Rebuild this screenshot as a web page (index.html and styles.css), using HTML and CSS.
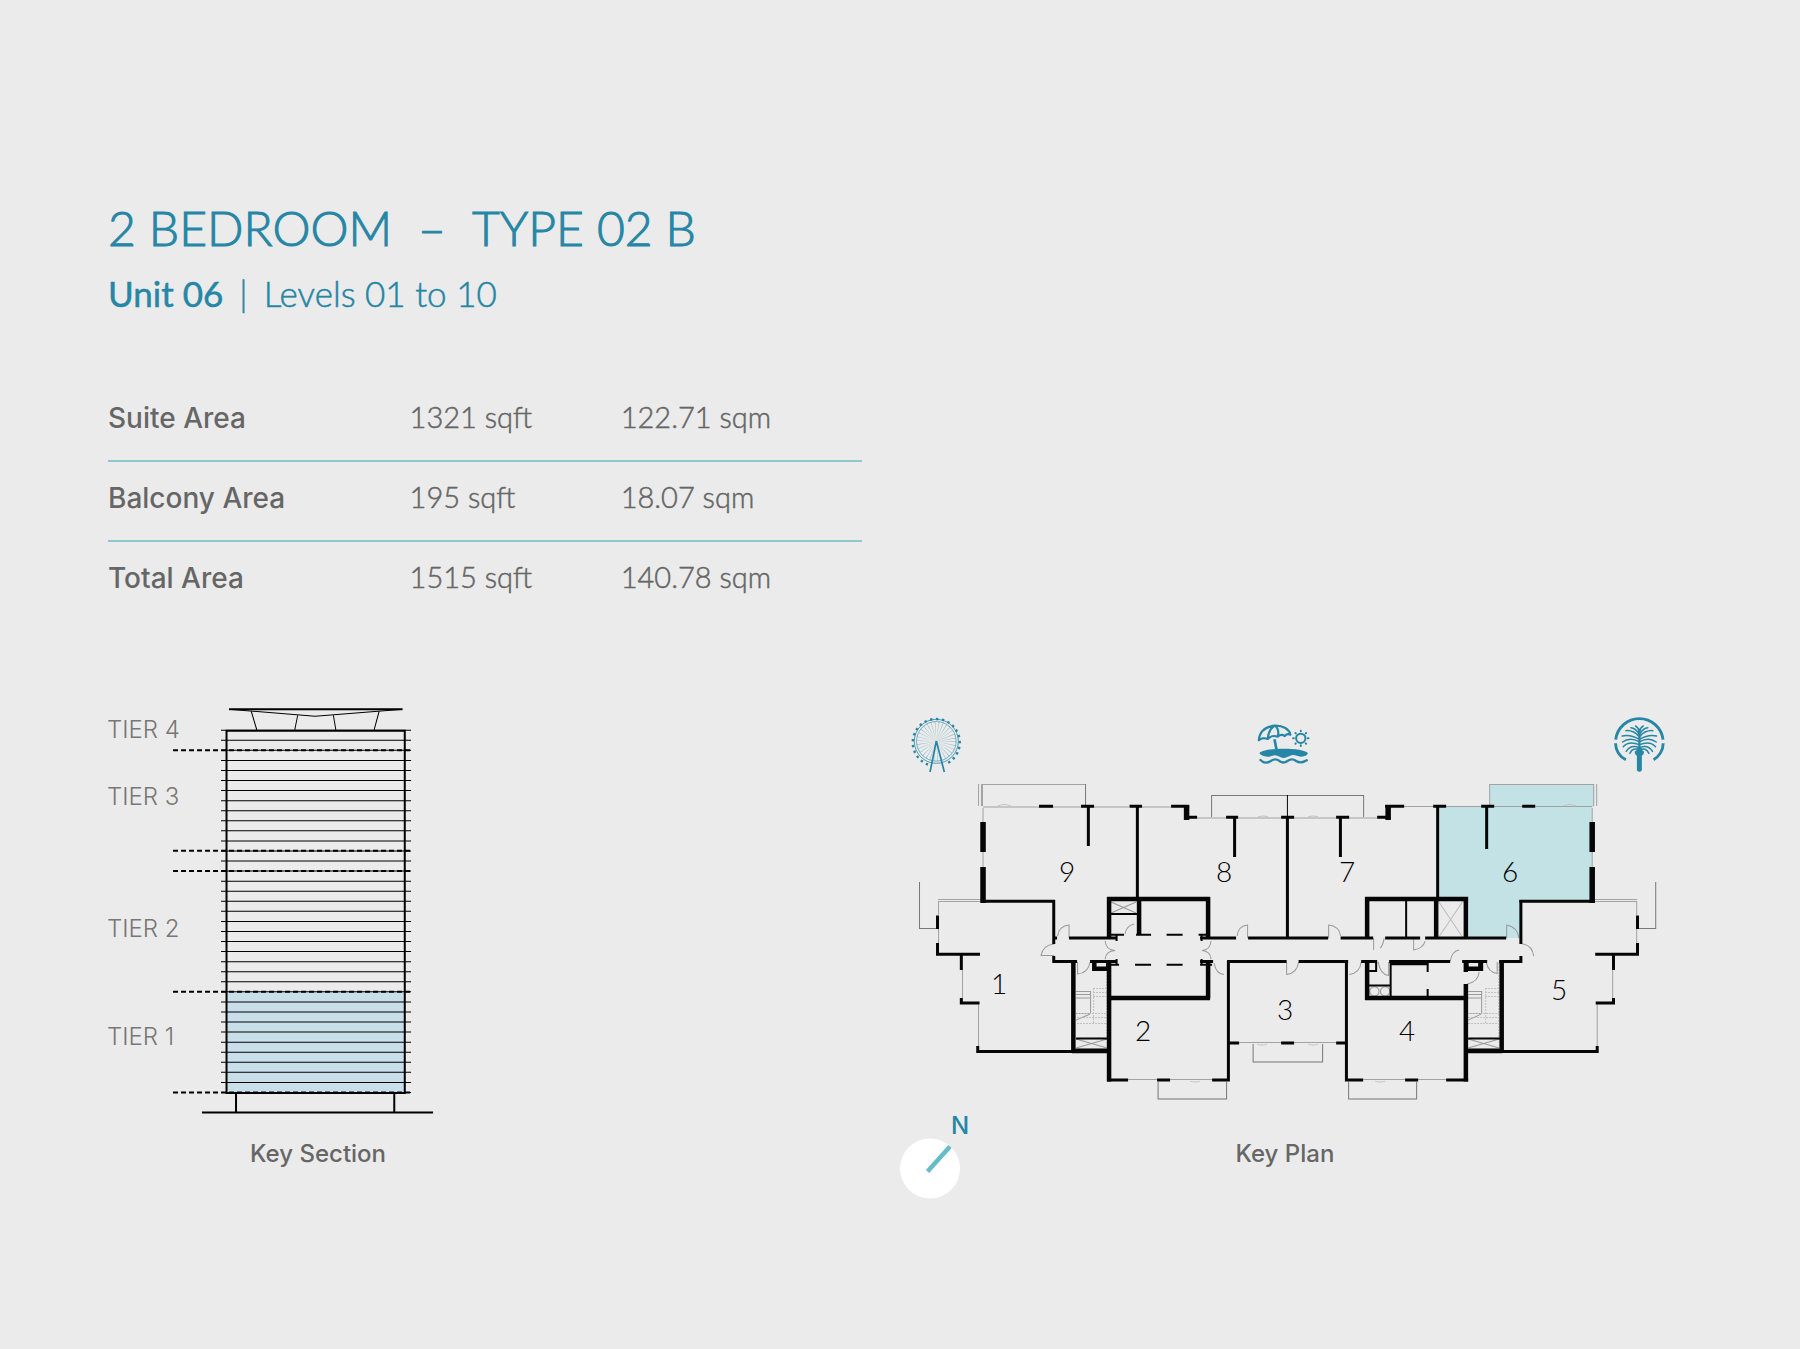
FILE: index.html
```html
<!DOCTYPE html>
<html lang="en">
<head>
<meta charset="utf-8">
<meta name="viewport" content="width=device-width, initial-scale=1">
<title>2 Bedroom – Type 02 B</title>
<link rel="stylesheet" href="styles.css">
</head>
<body>
<main class="sheet">
  <header class="heading">
    <h1 class="title"><span>2 BEDROOM</span><span>–</span><span>TYPE 02 B</span></h1>
    <p class="subtitle"><strong>Unit 06</strong><span>|</span><span>Levels 01 to 10</span></p>
  </header>

  <table class="areas">
    <tbody>
      <tr><th scope="row">Suite Area</th><td>1321 sqft</td><td>122.71 sqm</td></tr>
      <tr><th scope="row">Balcony Area</th><td>195 sqft</td><td>18.07 sqm</td></tr>
      <tr><th scope="row">Total Area</th><td>1515 sqft</td><td>140.78 sqm</td></tr>
    </tbody>
  </table>

  <div class="keys">
    <figure class="section">
      <svg class="drawing" viewBox="108 700 326 430" role="img" aria-label="Tower section with tier 1 highlighted">
        <rect class="tier-fill" x="227" y="992" width="178" height="101"/>
        <path class="floor" d="M221 730.2h190m-190 10.06h190m-190 10.06h190m-190 10.06h190m-190 10.06h190m-190 10.06h190m-190 10.06h190m-190 10.06h190m-190 10.06h190m-190 10.06h190m-190 10.06h190m-190 10.06h190m-190 10.06h190m-190 10.06h190m-190 10.06h190m-190 10.06h190m-190 10.06h190m-190 10.06h190m-190 10.06h190m-190 10.06h190m-190 10.06h190m-190 10.06h190m-190 10.06h190m-190 10.06h190m-190 10.06h190m-190 10.06h190m-190 10.06h190m-190 10.06h190m-190 10.06h190m-190 10.06h190m-190 10.06h190m-190 10.06h190m-190 10.06h190m-190 10.06h190m-190 10.06h190m-190 10.06h190m-190 10.06h190"/>
        <path class="tier-line" d="M173 750.3H411M173 850.8H411M173 871H411M173 991.8H411M173 1092.4H411"/>
        <path class="frame" d="M226.5 730.8H404.7V1093H226.5zM236 1093V1112M394.2 1093V1112M202 1112.5H433M229 709.2H402.5"/>
        <path class="roof" d="M232 709.5L315 716.3L400 709.5M251.3 711.5L256.8 730M297.7 715L294.7 730M333.3 715L335.8 730M379 711.5L374 730"/>
        <g class="tier-name">
          <text x="107" y="738">TIER 4</text>
          <text x="107" y="805">TIER 3</text>
          <text x="107" y="937">TIER 2</text>
          <text x="107" y="1045">TIER 1</text>
        </g>
      </svg>
      <figcaption class="section-caption">Key Section</figcaption>
    </figure>

    <figure class="plan">
      <svg class="drawing" viewBox="900 700 792 410" role="img" aria-label="Floor key plan with unit 6 highlighted">
        <!-- ferris wheel -->
        <g class="ink">
          <circle cx="936.3" cy="741.3" r="22" stroke-width=".8"/>
          <circle cx="936.3" cy="741.3" r="19.8" stroke-width=".6"/>
          <path d="M928 764.500A23.500 23.500 0 1 1 945 764.300" stroke-width="2.4" stroke-dasharray="2.4 3.5"/>
          <circle cx="936.3" cy="741.3" r="10" stroke-width="19" stroke-dasharray=".35 1.74" opacity=".45"/>
          <path d="M936.3 741L930 772M936.3 741L944.3 772" stroke-width="1.7"/>
        </g>
        <!-- beach -->
        <g class="ink" transform="translate(1240 700) scale(.3333)">
          <path stroke-width="6.500" stroke-linejoin="round" d="M56 121C58 96 75 80 103 77C130 76 147 88 151 104C145 101 138 103 134 108C127 103 119 104 113 110C103 106 90 108 83 117C74 113 62 115 56 121zM103 77C88 88 84 102 83 117M103 77C115 84 116 98 113 110"/>
          <path stroke-width="8" d="M103 118L109 148"/>
          <circle cx="182" cy="115" r="14" stroke-width="6"/>
          <path stroke-width="6" stroke-linecap="round" d="M182 94v-2M182 136v2M161 115h-2M203 115h2M167 100l-1-1M197 100l1-1M167 130l-1 1M197 130l1 1"/>
          <path class="solid" d="M58 159C72 142 190 142 203 159C204 165 192 170 182 170C172 170 164 163 154 166C144 170 138 174 130 174C120 174 114 166 105 166C96 166 92 171 82 170C72 169 60 166 58 159z"/>
          <path stroke-width="7" stroke-linecap="round" d="M61 180C68 187 80 191 92 183Q106 173 118 183Q130 192 142 183Q156 173 168 183Q182 192 200 181"/>
        </g>
        <!-- palm island -->
        <g class="ink" transform="translate(1600 700) scale(.3333)">
          <path stroke-width="8.500" d="M46.500 119A71.500 71.500 0 0 1 188.500 119M46 130C46 150 58 170 77 179M189 130C189 150 177 170 160 179"/>
          <path stroke-width="15" stroke-linecap="round" d="M117.500 160V208"/>
          <path stroke-width="7" d="M117.500 86V155"/>
          <path class="solid" d="M111 144H124L126 151L132 155L129 164L124 167H111L106 164L103 155L109 151z"/>
          <path stroke-width="4.500" stroke-linecap="round" d="M117 150Q98 140 89 160M117 143Q92 132 78 154M117 134Q86 122 69 140M117 125Q88 110 67 126M117 118Q90 102 66 108M117 110Q100 90 77 92M117 102Q106 84 92 83M117 94Q114 82 106 78M118 150Q137 140 146 160M118 143Q143 132 157 154M118 134Q149 122 166 140M118 125Q147 110 168 126M118 118Q145 102 169 108M118 110Q135 90 158 92M118 102Q129 84 143 83M118 94Q121 82 129 78"/>
        </g>

        <path class="unit-fill" d="M1437 807H1489V784H1594V807H1592V901H1520V938H1467V898H1437z"/>

        <!-- glazing and balconies -->
        <g class="glass">
          <path d="M983 807H1129M1142 807H1171M1404 806.500H1433M1446 806.500H1592M1197 818H1226M1238 818H1281M1294 818H1336M1349 818H1377M983 808V822M983 852V867M1592 808V822M1592 852V867M938 899.500H981M938 901.500H981M1594 899.500H1637M1594 901.500H1637M938.500 901V915M938.500 929V943M1636.500 901V915M1636.500 929V943M962.500 970V998M1612.500 970V998M978.500 1004V1046M1597 1004V1046M1239 1042.500H1281M1294 1042.500H1336M1128 1079.500H1157M1170 1079.500H1212M1363 1079.500H1405M1418 1079.500H1446"/>
          <path d="M978.500 784V806M981.500 784V806M982.500 806V784.500H1085.500M1489.500 806V784.500H1594M1593.500 784V806M1596.500 784V806"/>
          <path class="sash" d="M998 806q6-3 13 0M1563 806q6-3 13 0M1258 817q5-2 10 0M1308 817q5-2 10 0M1257 1044q5 2 10 0M1308 1044q5 2 10 0M1190 1081q5 2 10 0M1375 1081q5 2 10 0"/>
        </g>
        <path class="edge" d="M1085.500 784V805M919.500 882V928.500H936M1655.500 882V928.500H1638M1211.500 817V795.500H1363.500V817M1253 1044V1062H1322.500V1044M1158 1082V1099H1226.500V1082M1348.500 1082V1099H1416.500V1082"/>

        <!-- doors, stairs and shafts -->
        <g class="detail">
          <path d="M1069 938V925Q1059 926 1057.500 936M1054 955.500H1041Q1043 945 1054 944M1077.500 962V974Q1088 973 1090 962M1134 924Q1126 926 1125 934M1105 941Q1106 950 1115 950.500Q1106 951 1105 959M1211 941Q1210 950 1202 950.500Q1210 951 1211 959M1247.500 938V925Q1238 926 1237 936M1328.500 938V925Q1339 926 1340.500 936M1214 963Q1216 974 1224 974.500M1286.500 962V974.500Q1297 973 1298.500 962M1349 974.500Q1360 973 1361 962M1373.500 938V950M1384 938Q1383 945 1380 948M1413.500 938V950Q1423 948 1425 941M1450 961Q1452 951 1459 950M1378 962Q1380 974 1388.500 975.500V962M1467 984Q1478 982 1479 972M1486 962Q1488 972 1497 973.500V962M1506.500 938V925Q1517 927 1519 938M1522 944Q1532 945 1533.500 956"/>
          <path d="M1111 902L1136 913M1136 902L1111 913M1076 1039L1107 1048M1107 1039L1076 1048M1076 1048.500H1107M1468 1039L1499 1048M1499 1039L1468 1048M1468 1048.500H1499M1438 937.500H1463"/>
          <path class="shaft" d="M1438 901L1463 938M1463 901L1438 938"/>
          <path d="M1076 991.500H1090.500V1013.500H1076M1076 994.500H1090M1076 998H1090M1076 1020L1090 1014M1468 991.500H1481.500V1013.500H1468M1468 994.500H1481M1468 998H1481M1468 1020L1481 1014"/>
          <circle cx="1374.300" cy="991.300" r="4.700"/>
          <circle cx="1385" cy="991.300" r="4.700"/>
          <path class="treads" d="M1093.500 988V1024M1106.500 963V1037M1093 988.500H1107M1093 992.500H1107M1093 996.500H1107M1077 1013.500H1107M1077 1017.500H1107M1077 1023.500H1107M1485.500 988V1024M1498.500 963V1037M1485 988.500H1499M1485 992.500H1499M1485 996.500H1499M1468 1013.500H1499M1468 1017.500H1499M1468 1023.500H1499"/>
        </g>

        <!-- walls -->
        <path class="wall w2" d="M1111 914H1137M1111 934.700H1124M1136 934.700H1151M1166.500 934.700H1182.500M1198.500 934.700H1208M1107 964.700H1119M1135 964.700H1151M1166.500 964.700H1182.500M1200 964.700H1212M1116.500 935V941M1116.500 959V965M1201.500 935V941M1201.500 959V965M1076 1038.300H1108M1468 1038.300H1500M1369 971H1376V962M1390.500 962V997M1367 985.500H1391M1427.500 961V972M1427.500 989V998M1406 899V938"/>
        <path class="wall w3" d="M1039 806.300H1053M1081 806.300H1094M1129.500 806.300H1142M1171 806.300H1189M1385 806.300H1404M1433 806.300H1446M1481 806.300H1494M1522 806.300H1535M1184 817.300H1197M1226 817.300H1238M1281 817.300H1294M1336 817.300H1349M1377 817.300H1390M1137.300 805V898M1287.300 817V938M1437.500 805V898M981 901.300H1055M1053.700 900V944M1519 901.300H1594M1520.700 900V944M937.500 915.500V929M937.500 943V954.300H980M1637.300 915.500V929M1637.300 943V954.300H1595M961.300 955V970M961.300 998V1003H979.500M1613.300 955V970M1613.300 998V1003H1595.500M977.700 1046V1051.300M1597 1046V1051.300M976.200 1051.300H1108M1468 1051.300H1598.500M1228.300 961V1080H1212M1346.300 961V1080H1363M1228 1043H1239M1281 1043H1294M1336 1043H1347M1107 1080H1128M1157 1080H1170M1405 1080H1418M1446 1080H1468"/>
        <path class="wall w3" d="M1055 938H1057M1069 938H1117M1200 938H1236M1248 938H1328M1340.500 938H1373M1385 938H1420M1425 938H1506M1053.700 956V961.500H1077M1090 961.500H1117M1200 961.500H1213M1227 961.500H1286.500M1298.500 961.500H1348M1361 961.500H1377M1389 961.500H1450M1462 961.500H1487M1499 961.500H1520.700V956"/>
        <path class="wall w4" d="M1107 899H1210M1139 899V935M1109 897V938M1109 962V1081.500M1208 897V938M1208 962V998M1107 998H1210M1365 899H1468M1367 897V938M1436 899V938M1465.700 897V938M1367 962V1000M1365 998H1468M1390 963H1428M1465.700 961V972M1465.700 984V1081.500M1073.300 961V1051M1501.500 961V1051M1072 1051H1108M1466 1051H1502"/>
        <path class="wall w3" d="M1088.300 805V846M1486.500 805V849M1234.500 818V857M1340.300 818V857"/>
        <path class="wall w5" d="M983 822V852M983 867V903M1592 822V852M1592 867V903M1186.500 805V820M1388 805V820"/>
        <path class="wall-fill" fill-rule="evenodd" d="M1092 961H1109V971H1092zM1096.500 963V966.500H1106V963zM1464 961H1483V971H1464zM1468.500 963V966.500H1478V963z"/>
        <path class="partition" d="M1287.300 795V817"/>

        <g class="unit-number">
          <text x="1067" y="882">9</text>
          <text x="1224" y="882">8</text>
          <text x="1347" y="882">7</text>
          <text x="1510" y="882">6</text>
          <text x="1559" y="1000">5</text>
          <text x="1407" y="1041">4</text>
          <text x="1285" y="1020">3</text>
          <text x="1143" y="1041">2</text>
          <text x="999" y="994">1</text>
        </g>
      </svg>
      <figcaption class="plan-caption">
        <svg class="compass" viewBox="0 0 70 90" role="img" aria-label="North arrow">
          <circle cx="30" cy="58.500" r="30" fill="#fff"/>
          <path d="M27.500 61.500L50 36.500" stroke="#66bcc6" stroke-width="4.500"/>
          <text class="north" x="51" y="24">N</text>
        </svg>
        <span class="plan-name">Key Plan</span>
      </figcaption>
    </figure>
  </div>
</main>
</body>
</html>
```
FILE: styles.css
```css
* { box-sizing: border-box; }

body {
  margin: 0;
  background: #ebebeb;
  color: #666;
  font-family: Inter, "Liberation Sans", sans-serif;
}

.sheet { padding: 200px 6% 148px; }

.heading { color: #2686a5; }

.title {
  display: flex;
  gap: 26px;
  margin: 0;
  font-family: Lato, "Liberation Sans", sans-serif;
  font-size: 48px;
  line-height: 56px;
  font-weight: 300;
  -webkit-text-stroke: 1px #2686a5;
}

.subtitle {
  display: flex;
  gap: 16px;
  margin: 15px 0 0;
  font-family: Lato, "Liberation Sans", sans-serif;
  font-size: 35px;
  line-height: 44px;
  font-weight: 300;
  -webkit-text-stroke: .5px #2686a5;
}
.subtitle strong { font-weight: 400; }

.areas {
  width: 47.6%;
  margin-top: 67px;
  border-collapse: collapse;
  table-layout: fixed;
  font-size: 28px;
  line-height: 40px;
}
.areas th,
.areas td {
  padding: 15px 0 22px;
  text-align: left;
  vertical-align: baseline;
}
.areas th { width: 40%; font-weight: 500; }
.areas td {
  width: 28%;
  font-family: Lato, "Liberation Sans", sans-serif;
  font-size: 29px;
  font-weight: 300;
  -webkit-text-stroke: .5px #666;
}
.areas td:last-child { width: 32%; }
.areas tr + tr { border-top: 2px solid #8fc7d0; }

.keys {
  display: grid;
  grid-template-columns: 326fr 792fr;
  column-gap: 29.4%;
  margin-top: 80px;
}

figure { margin: 0; }

.drawing { display: block; width: 100%; height: auto; }

figcaption {
  font-size: 24px;
  line-height: 32px;
  font-weight: 500;
}
.section-caption { padding: 8px 0 0 94px; text-align: center; }
.plan-caption { display: flex; }
.compass { flex: none; width: 70px; height: 90px; }
.plan-name { flex: 1; padding: 28px 92px 0 0; text-align: center; }
.north { fill: #2686a5; font-size: 24px; font-weight: 500; }

.tier-fill { fill: #c8dfea; }
.floor, .tier-line, .frame, .roof { fill: none; stroke: #000; }
.floor { stroke-width: 1; }
.tier-line { stroke-width: 2; stroke-dasharray: 5 3; }
.frame { stroke-width: 2; }
.roof { stroke-width: 1; }
.tier-name { fill: #777; font-size: 24px; font-weight: 300; }

.ink { fill: none; stroke: #2686a5; }
.solid { fill: #2686a5; stroke: none; }

.unit-fill { fill: #c3e2e5; }
.glass, .edge, .detail, .wall, .partition { fill: none; }
.glass { stroke: #a2a2a2; stroke-width: 1; }
.sash { stroke: #c0c0c0; }
.edge { stroke: #777; stroke-width: 1; }
.detail { stroke: #999; stroke-width: 1; }
.shaft { stroke: #bbb; }
.treads { stroke: #c0c0c0; stroke-dasharray: 2 1; }
.wall { stroke: #050505; }
.w2 { stroke-width: 2; }
.w3 { stroke-width: 3; }
.w4 { stroke-width: 4.5; }
.w5 { stroke-width: 5.5; }
.wall-fill { fill: #050505; }
.partition { stroke: #050505; stroke-width: 1; }
.unit-number {
  fill: #000;
  font-family: Lato, "Liberation Sans", sans-serif;
  font-size: 28px;
  font-weight: 300;
  text-anchor: middle;
}
```
